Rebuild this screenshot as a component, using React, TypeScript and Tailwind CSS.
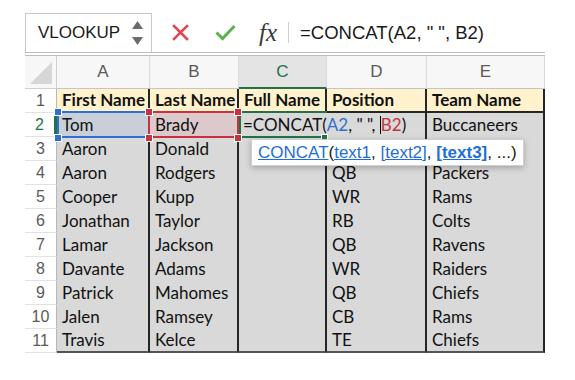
import React from "react";

const SANS = "font-['Liberation_Sans',Arial,sans-serif]";
const CELL = "font-['Lato',sans-serif]";

const rows: string[][] = [
  ["Aaron", "Donald", "", "", ""],
  ["Aaron", "Rodgers", "", "QB", "Packers"],
  ["Cooper", "Kupp", "", "WR", "Rams"],
  ["Jonathan", "Taylor", "", "RB", "Colts"],
  ["Lamar", "Jackson", "", "QB", "Ravens"],
  ["Davante", "Adams", "", "WR", "Raiders"],
  ["Patrick", "Mahomes", "", "QB", "Chiefs"],
  ["Jalen", "Ramsey", "", "CB", "Rams"],
  ["Travis", "Kelce", "", "TE", "Chiefs"],
];

const headers = ["First Name", "Last Name", "Full Name", "Position", "Team Name"];
const cols = ["A", "B", "C", "D", "E"];

const Handle = ({ pos, color }: { pos: string; color: string }) => (
  <span className={`absolute z-20 h-[8px] w-[8px] border border-white ${color} ${pos}`} />
);

const RowHead = ({ n, active }: { n: number; active?: boolean }) => (
  <div
    className={`flex items-center justify-center bg-white border-b border-[#e2e2e2] text-[16px] ${SANS} ${
      active ? "text-[#217346] border-r-[3px] border-r-[#217346]" : "text-[#5a5a5a] border-r border-r-[#b8b8b8]"
    }`}
  >
    {n}
  </div>
);

const Cell = ({ children, last }: { children?: React.ReactNode; last?: boolean }) => (
  <div
    className={`flex items-center pl-[5px] bg-[#d9d9d9] border-r-2 border-r-[#262626] whitespace-nowrap overflow-hidden text-[17px] text-[#111] ${CELL} ${
      last ? "border-b-2 border-b-[#555]" : ""
    }`}
  >
    {children}
  </div>
);

export default function App() {
  return (
    <div className="h-[380px] w-[575px] bg-white">
      {/* formula bar */}
      <div className="flex h-[52px] items-end pl-[25px]">
        <div className={`flex h-[39px] w-[127px] items-center border border-b-0 border-[#c9c9c9] pl-[12px] text-[17px] text-[#1a1a1a] ${SANS}`}>
          VLOOKUP
          <div className="ml-auto mr-[8px] flex flex-col gap-[8px]">
            <svg width="11" height="8" viewBox="0 0 11 8">
              <polygon points="5.5,0 11,8 0,8" fill="#6b6b6b" />
            </svg>
            <svg width="11" height="8" viewBox="0 0 11 8">
              <polygon points="0,0 11,0 5.5,8" fill="#6b6b6b" />
            </svg>
          </div>
        </div>
        <div className="flex h-[39px] items-center">
          <svg className="ml-[20px]" width="17" height="17" viewBox="0 0 17 17">
            <path d="M2 2 L15 15 M15 2 L2 15" stroke="#e2474f" strokeWidth="2.6" strokeLinecap="square" />
          </svg>
          <svg className="ml-[26px]" width="21" height="17" viewBox="0 0 21 17">
            <path d="M1.5 8.5 L7.5 14.5 L19.5 2" stroke="#5bb24f" strokeWidth="3" fill="none" />
          </svg>
          <span className="ml-[23px] font-['Liberation_Serif',serif] text-[25px] italic leading-none text-[#3a3a3a]">fx</span>
          <span className="ml-[11px] h-[21px] w-px bg-[#cfcfcf]" />
          <span className={`ml-[11px] text-[18.5px] text-[#1a1a1a] ${SANS}`}>=CONCAT(A2, " ", B2)</span>
        </div>
      </div>
      <div className="ml-[25px] h-[4px] w-[520px] border-y border-[#bdbdbd]" />

      {/* sheet */}
      <div className="relative ml-[25px] grid w-[520px] grid-cols-[32px_93px_89px_88px_100px_118px] grid-rows-[33px_repeat(11,24px)]">
        {/* corner */}
        <div className="flex items-end justify-end border-r border-b border-[#cfcfcf] bg-[#f7f7f7] p-[4px]">
          <svg width="22" height="22" viewBox="0 0 22 22">
            <polygon points="22,0 22,22 0,22" fill="#d6d6d6" />
          </svg>
        </div>
        {cols.map((c) => (
          <div
            key={c}
            className={`flex items-center justify-center border-r border-r-[#dadada] text-[17px] ${SANS} ${
              c === "C"
                ? "bg-[#e4e4e4] text-[#217346] border-b-2 border-b-[#217346]"
                : "bg-[#f7f7f7] text-[#5a5a5a] border-b border-b-[#c4c4c4]"
            }`}
          >
            {c}
          </div>
        ))}

        {/* row 1 */}
        <RowHead n={1} />
        {headers.map((h) => (
          <div
            key={h}
            className={`flex items-center pl-[5px] bg-[#fff2cc] border-r-2 border-b-2 border-[#262626] whitespace-nowrap text-[17px] font-bold text-[#111] ${CELL}`}
          >
            {h}
          </div>
        ))}

        {/* row 2 */}
        <RowHead n={2} active />
        <div className={`relative flex items-center pl-[5px] bg-[#c9ced8] border-r-2 border-r-[#262626] text-[17px] text-[#111] ${CELL}`}>
          Tom
          <span className="absolute -top-[2px] left-0 -right-[2px] -bottom-px z-10 border-2 border-[#2f6fd1]" />
          <Handle pos="-left-[3px] -top-[5px]" color="bg-[#2f6fd1]" />
          <Handle pos="-left-[3px] -bottom-[5px]" color="bg-[#2f6fd1]" />
        </div>
        <div className={`relative flex items-center pl-[5px] bg-[#dbc9cb] border-r-2 border-r-[#262626] text-[17px] text-[#111] ${CELL}`}>
          Brady
          <span className="absolute -top-[2px] -left-[2px] -right-[2px] -bottom-px z-10 border-2 border-[#c8323e]" />
          <Handle pos="-left-[5px] -top-[5px]" color="bg-[#c8323e]" />
          <Handle pos="-left-[5px] -bottom-[5px]" color="bg-[#c8323e]" />
          <Handle pos="-right-[5px] -top-[5px]" color="bg-[#c8323e]" />
          <Handle pos="-right-[5px] -bottom-[5px]" color="bg-[#c8323e]" />
        </div>
        <div className={`relative z-10 flex items-center pl-[4px] bg-[#d9d9d9] border-r-2 border-r-[#d9d9d9] whitespace-nowrap text-[17px] text-[#111] ${CELL}`}>
          <span className="absolute -top-[2px] left-0 -right-[2px] -bottom-px border-2 border-r-0 border-[#217346]" />
          <span className="absolute -right-[3px] -bottom-[4px] h-[7px] w-[7px] border border-white bg-[#217346]" />
          <span className="relative">
            =CONCAT(<span className="text-[#2f6fd1]">A2</span>, " ",{" "}
            <span className="inline-block h-[18px] w-px translate-y-[3px] bg-black" />
            <span className="text-[#c8323e]">B2</span>)
          </span>
        </div>
        <Cell />
        <Cell>Buccaneers</Cell>

        {/* rows 3-11 */}
        {rows.map((r, i) => (
          <React.Fragment key={i}>
            <RowHead n={i + 3} />
            {r.map((v, j) => (
              <Cell key={j} last={i === rows.length - 1}>
                {v}
              </Cell>
            ))}
          </React.Fragment>
        ))}

        {/* function tooltip */}
        <div
          className={`absolute left-[226px] top-[83px] z-30 flex h-[27px] items-center whitespace-nowrap border border-[#cfcfcf] bg-white px-[6px] text-[17px] text-[#1a1a1a] shadow-[0_2px_6px_rgba(0,0,0,0.25)] ${SANS}`}
        >
          <span className="text-[#1c6fd9] underline">CONCAT</span>(
          <span className="text-[#1c6fd9] underline">text1</span>,&nbsp;
          <span className="text-[#1c6fd9] underline">[text2]</span>,&nbsp;
          <span className="font-bold text-[#1c6fd9] underline">[text3]</span>, ...)
        </div>
      </div>
    </div>
  );
}
